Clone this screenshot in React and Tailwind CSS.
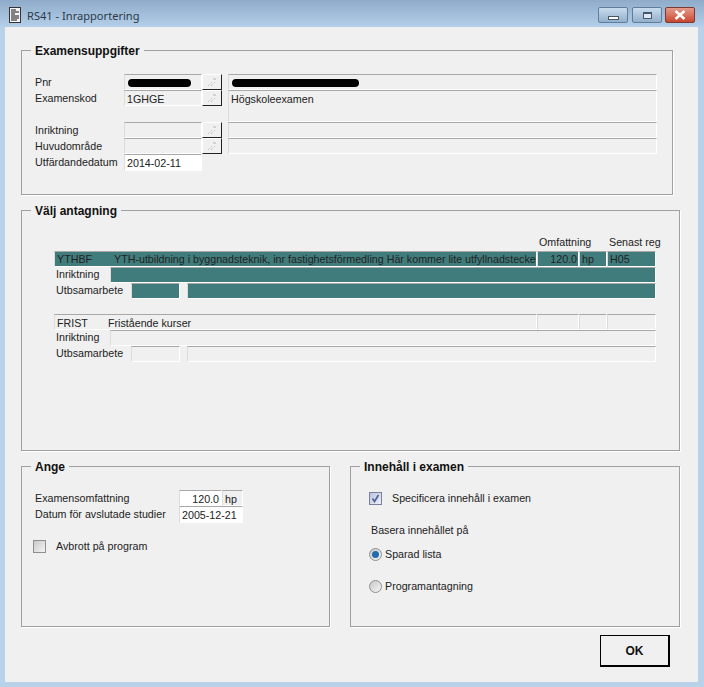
const FIELD = 'h-4 min-w-0 border border-t-[#a8a8a8] border-l-[#dcdcdc] border-r-white border-b-white overflow-hidden whitespace-nowrap pl-[2px] leading-[15px]';

const PROGRAMS = [
  {
    code: 'YTHBF',
    name: 'YTH-utbildning i byggnadsteknik, inr fastighetsförmedling Här kommer lite utfyllnadstecken',
    codeWidth: 'w-[57px]',
    points: '120.0',
    unit: 'hp',
    term: 'H05',
    selected: true,
  },
  {
    code: 'FRIST',
    name: 'Fristående kurser',
    codeWidth: 'w-[51px]',
    points: '',
    unit: '',
    term: '',
    selected: false,
  },
];

function Group({ title, className, children }) {
  return (
    <div className={`relative border border-[#a0a0a0] shadow-[1px_1px_0_#fff] ${className}`}>
      <span className="absolute left-[9px] top-[-7px] bg-[#f0f0f0] px-[4px] text-[12px] font-bold leading-[14px] text-[#111]">
        {title}
      </span>
      {children}
    </div>
  );
}

function LookupButton() {
  return (
    <div className="flex h-4 w-5 items-center justify-center border border-t-white border-l-white border-r-[#222] border-b-[#222] bg-[#f0f0f0]">
      <svg width="10" height="9" viewBox="0 0 10 9" fill="none" stroke="#b4b4b4" strokeWidth="1">
        <path d="M1 8 L5 4" strokeDasharray="1 1" />
        <path d="M4 8 L8 4" strokeDasharray="1 1" />
        <path d="M6 1 L9 1" />
      </svg>
    </div>
  );
}

function Redacted({ className }) {
  return <div className={`mt-[1px] h-[8px] rounded-full bg-black ${className}`} />;
}

function ProgramBlock({ program }) {
  const fill = program.selected ? 'bg-[#417c7c]' : '';
  return (
    <div className="text-[#222]">
      <div className="flex">
        <div className={`${FIELD} ${fill} flex w-[483px] ${program.selected ? '' : 'pt-[1px]'}`}>
          <span className={`shrink-0 ${program.codeWidth}`}>{program.code}</span>
          <span>{program.name}</span>
        </div>
        <div className={`${FIELD} ${fill} w-[42px] pr-[1px] text-right`}>{program.points}</div>
        <div className={`${FIELD} ${fill} w-[28px]`}>{program.unit}</div>
        <div className={`${FIELD} ${fill} w-[49px]`}>{program.term}</div>
      </div>
      <div className="flex">
        <span className="h-4 w-[56px] pl-[2px] leading-[15px]">Inriktning</span>
        <div className={`${FIELD} ${fill} w-[546px]`} />
      </div>
      <div className="flex">
        <span className="h-4 w-[77px] pl-[2px] leading-[15px]">Utbsamarbete</span>
        <div className={`${FIELD} ${fill} w-[49px]`} />
        <div className={`${FIELD} ${fill} ml-[7px] w-[469px]`} />
      </div>
    </div>
  );
}

function Checkbox({ checked }) {
  const look = checked
    ? 'border-[#7a80a0] from-[#bcc4dc] to-[#eef0f8]'
    : 'border-[#8e8f8f] from-[#c9c9c9] to-[#f4f4f4]';
  return (
    <div className={`flex h-[13px] w-[13px] items-center justify-center border bg-gradient-to-br ${look}`}>
      {checked && (
        <svg width="9" height="9" viewBox="0 0 9 9" fill="none" stroke="#4a5f97" strokeWidth="1.6">
          <path d="M1.5 4.5 L3.5 7.5 L7.5 1" />
        </svg>
      )}
    </div>
  );
}

function Radio({ checked }) {
  return (
    <div className="flex h-[13px] w-[13px] items-center justify-center rounded-full border border-[#8e8f8f] bg-gradient-to-br from-[#c8c8c8] to-[#f6f6f6]">
      {checked && <div className="h-[7px] w-[7px] rounded-full bg-[#1f6cae]" />}
    </div>
  );
}

export default function App() {
  return (
    <div className="flex h-[687px] w-[704px] flex-col overflow-hidden bg-[#b9d2ea] font-['Liberation_Sans',Arial,sans-serif] text-[10.7px] text-[#222]">
      {/* Title bar */}
      <div className="flex h-[27px] shrink-0 bg-gradient-to-b from-[#8eabc9] to-[#b4cfe9] pl-[9px] pr-[9px] pt-[7px]">
        <svg width="12" height="16" viewBox="0 0 12 16" className="shrink-0">
          <rect x="0.5" y="0.5" width="11" height="15" fill="#f4f4f4" stroke="#333" />
          <path d="M2 3 H7 M2 5 H10 M2 7 H6 M2 9 H10 M2 11 H10 M2 13 H8" stroke="#111" strokeWidth="1.2" />
        </svg>
        <span className="ml-[6px] font-['Noto_Sans',sans-serif] text-[11.1px] leading-[18px] text-[#2b3a4a]">
          RS41 - Inrapportering
        </span>
        <div className="ml-auto flex h-4 gap-[3px]">
          <div className="flex h-4 w-[30px] items-end justify-center rounded-[2px] border border-[#5f7d9c] bg-gradient-to-b from-[#c9dcee] to-[#93b0cb] pb-[2px]">
            <div className="h-[4px] w-[11px] border border-[#47586a] bg-white" />
          </div>
          <div className="ml-[1px] flex h-4 w-[30px] items-center justify-center rounded-[2px] border border-[#5f7d9c] bg-gradient-to-b from-[#c9dcee] to-[#93b0cb]">
            <div className="h-[7px] w-[9px] border border-t-2 border-[#47586a] bg-[#dfe8f1]" />
          </div>
          <div className="flex h-4 w-[30px] items-center justify-center rounded-[2px] border border-[#7d3a30] bg-gradient-to-b from-[#e49a8b] to-[#c9452f]">
            <svg width="12" height="10" viewBox="0 0 12 10" stroke="#fff" strokeWidth="2.4">
              <path d="M1.5 1 L10.5 9 M10.5 1 L1.5 9" />
            </svg>
          </div>
        </div>
      </div>

      {/* Client area */}
      <div className="mb-[5px] ml-[5px] mr-[6px] flex-1 rounded-[1px] bg-[#f0f0f0] pl-[16px] pt-[23px]">
        <Group title="Examensuppgifter" className="h-[145px] w-[652px] pl-[13px] pt-[23px]">
          <div className="grid grid-cols-[89px_78px_20px_6px_429px] grid-rows-[repeat(6,16px)] leading-4">
            <span>Pnr</span>
            <div className={`${FIELD} flex items-center pl-[3px]`}>
              <Redacted className="w-[63px]" />
            </div>
            <LookupButton />
            <span />
            <div className={`${FIELD} flex items-center pl-[3px]`}>
              <Redacted className="w-[127px]" />
            </div>

            <span>Examenskod</span>
            <div className={`${FIELD} pt-[1px]`}>1GHGE</div>
            <LookupButton />
            <span />
            <div className={`${FIELD} row-span-2 h-8 pt-[1px]`}>Högskoleexamen</div>

            <span className="col-span-4" />

            <span>Inriktning</span>
            <div className={FIELD} />
            <LookupButton />
            <span />
            <div className={FIELD} />

            <span>Huvudområde</span>
            <div className={FIELD} />
            <LookupButton />
            <span />
            <div className={FIELD} />

            <span>Utfärdandedatum</span>
            <div className={`${FIELD} h-[17px] bg-white pt-[1px]`}>2014-02-11</div>
          </div>
        </Group>

        <Group title="Välj antagning" className="mt-[15px] h-[241px] w-[659px] pl-[32px] pt-[25px]">
          <div className="flex h-[15px] leading-[13px]">
            <span className="ml-[485px] w-[70px]">Omfattning</span>
            <span>Senast reg</span>
          </div>
          <div className="flex flex-col gap-[15px]">
            {PROGRAMS.map((program) => (
              <ProgramBlock key={program.code} program={program} />
            ))}
          </div>
        </Group>

        <div className="mt-[15px] flex items-start gap-[20px]">
          <Group title="Ange" className="h-[161px] w-[309px] pl-[13px] pt-[23px]">
            <div className="flex h-4">
              <span className="w-[144px] leading-4">Examensomfattning</span>
              <div className={`${FIELD} w-[43px] bg-white pr-[2px] pt-[1px] text-right`}>120.0</div>
              <div className={`${FIELD} w-[21px] pt-[1px]`}>hp</div>
            </div>
            <div className="flex h-[17px]">
              <span className="w-[144px] leading-4">Datum för avslutade studier</span>
              <div className={`${FIELD} h-[17px] w-[64px] bg-white pt-[1px]`}>2005-12-21</div>
            </div>
            <div className="ml-[-2px] mt-[15px] flex items-center">
              <Checkbox />
              <span className="ml-[10px]">Avbrott på program</span>
            </div>
          </Group>

          <Group title="Innehåll i examen" className="h-[161px] w-[330px] pl-[18px] pt-[23px]">
            <div className="flex items-center">
              <Checkbox checked />
              <span className="ml-[10px]">Specificera innehåll i examen</span>
            </div>
            <div className="ml-[2px] mt-[18px] leading-[13px]">Basera innehållet på</div>
            <div className="mt-[9px] flex items-center gap-[3px]">
              <Radio checked />
              <span>Sparad lista</span>
            </div>
            <div className="mt-[16px] flex items-center gap-[3px]">
              <Radio />
              <span>Programantagning</span>
            </div>
          </Group>
        </div>

        <div className="mt-[8px] flex justify-end pr-[28px]">
          <button className="h-[32px] w-[70px] border border-b-2 border-r-2 border-black bg-[#f0f0f0] text-[12px] font-bold text-[#111]">
            OK
          </button>
        </div>
      </div>
    </div>
  );
}
